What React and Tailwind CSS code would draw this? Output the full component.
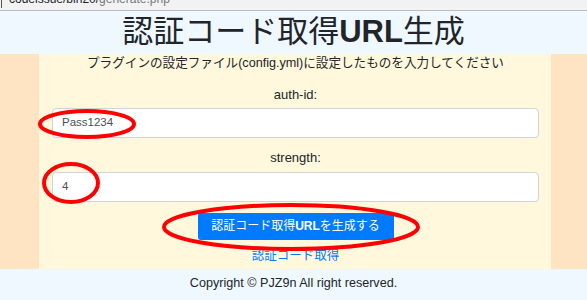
import React from "react";

const jp = { fontFamily: '"Liberation Sans", "Noto Sans CJK JP", sans-serif' };

export default function App() {
  return (
    <div className="relative w-[587px] h-[300px] overflow-hidden bg-[#f0f8ff]" style={jp}>
      {/* browser url bar (cut off) */}
      <div className="relative h-[10px] overflow-hidden bg-[#f1f2f4]">
        <div className="absolute left-[1px] top-0 w-[1px] h-[8px] bg-[#555]" />
        <div className="pl-[9px] mt-[-8px] text-[12px] leading-[14px] whitespace-nowrap">
          <span className="text-[#222]">codeissue/bin20/</span>
          <span className="text-[#777]">generate.php</span>
        </div>
      </div>
      <div className="h-[1px] bg-[#bdbdbd]" />
      {/* header */}
      <div className="h-[43px] bg-[#f0f8ff] flex items-center justify-center">
        <h1 className="text-[31px] leading-[40px] text-[#212529] font-normal mt-[-1px]">
          認証コード取得<span className="font-bold">URL</span>生成
        </h1>
      </div>
      {/* main */}
      <div className="flex h-[215px]">
        <div className="w-[39px] bg-[#ffe4c4]" />
        <div className="flex-1 bg-[#fff8dc] flex flex-col items-stretch pr-[12px] pl-[13px] text-[#212529]">
          <p className="h-[19px] leading-[19px] text-[12.6px] text-center">
            プラグインの設定ファイル(config.yml)に設定したものを入力してください
          </p>
          <div className="mt-[12px] h-[20px] leading-[20px] text-[13px] text-center">auth-id:</div>
          <div className="mt-[3px] h-[30px] bg-white border border-[#ced4da] rounded-[4px] flex items-center pl-[9px] text-[11.5px] text-[#495057]">
            Pass1234
          </div>
          <div className="mt-[10px] h-[20px] leading-[20px] text-[13px] text-center">strength:</div>
          <div className="mt-[4px] h-[30px] bg-white border border-[#ced4da] rounded-[4px] flex items-center pl-[9px] text-[11.5px] text-[#495057]">
            4
          </div>
          <div className="mt-[11px] flex justify-center">
            <button className="w-[196px] h-[27px] bg-[#007bff] text-white text-[12px] leading-[27px] rounded-[3px]">
              認証コード取得<span className="font-bold">URL</span>を生成する
            </button>
          </div>
          <div className="mt-[7px] h-[18px] leading-[18px] text-[12.5px] text-center">
            <a className="text-[#007bff]">認証コード取得</a>
          </div>
        </div>
        <div className="w-[36px] bg-[#ffe4c4]" />
      </div>
      {/* footer */}
      <div className="h-[31px] flex items-center justify-center text-[12.6px] text-[#212529] pb-[2px]">
        Copyright © PJZ9n All right reserved.
      </div>
      {/* red annotation ellipses */}
      <svg className="absolute left-0 top-0 pointer-events-none" width="587" height="300" viewBox="0 0 587 300">
        <ellipse cx="87" cy="124" rx="47" ry="13" fill="none" stroke="#f00" strokeWidth="4" />
        <ellipse cx="71" cy="183" rx="27" ry="19" fill="none" stroke="#f00" strokeWidth="4" />
        <ellipse cx="291" cy="227" rx="127" ry="22" fill="none" stroke="#f00" strokeWidth="4" />
      </svg>
    </div>
  );
}
